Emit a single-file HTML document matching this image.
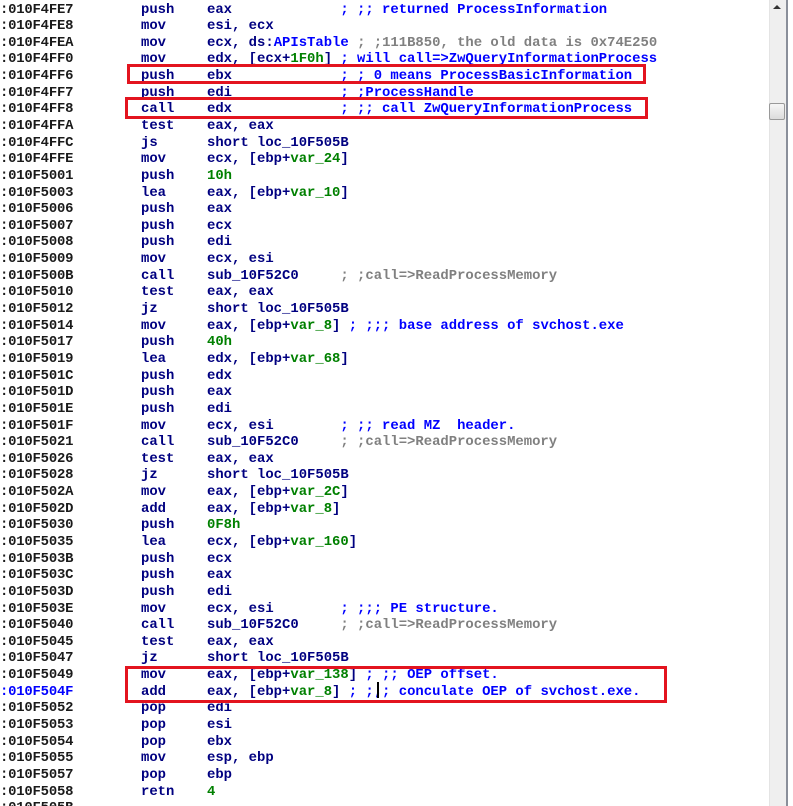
<!DOCTYPE html>
<html><head><meta charset="utf-8"><style>
html,body{margin:0;padding:0;background:#fff;width:793px;height:806px;overflow:hidden}
body{position:relative;font-family:"Liberation Mono",monospace;font-size:13.9px;font-weight:bold}
.l{position:absolute;left:0;height:16.64px;line-height:16.64px;white-space:pre}
.a{position:absolute;left:0;color:#1a1a1a;letter-spacing:-0.2px}
.m{position:absolute;left:141px;color:#000080}
.o{position:absolute;left:207px;color:#000080}
.c{color:#0000ff}.g{color:#808080}.n{color:#008000}
.box{position:absolute;border:3px solid #e3141f;box-sizing:border-box}
.sb{position:absolute;left:769px;top:0;width:17px;height:806px;background:#efefef;border-left:1px solid #e4e4e4}
.sbb{position:absolute;left:786px;top:0;width:2px;height:806px;background:#8a8f9a}
</style></head><body>
<div class="sb"></div><div class="sbb"></div>
<div style="position:absolute;left:773px;top:5px;width:0;height:0;border-left:4px solid transparent;border-right:4px solid transparent;border-bottom:4px solid #333"></div>
<div style="position:absolute;left:769px;top:103px;width:16px;height:17px;background:linear-gradient(#f6f6f6,#dcdcdc);border:1px solid #999;border-radius:2px;box-sizing:border-box"></div>
<div id="c"></div>
<div class="box" style="left:127px;top:64px;width:519px;height:20px"></div>
<div class="box" style="left:125px;top:97px;width:523px;height:22px"></div>
<div class="box" style="left:125px;top:666px;width:542px;height:37px"></div>
<div style="position:absolute;left:377px;top:682px;width:2px;height:16px;background:#000"></div>
<script>
var L=[
["010F4FE7","push","eax             <span class=c>; ;; returned ProcessInformation</span>"],
["010F4FE8","mov","esi, ecx"],
["010F4FEA","mov","ecx, ds:<span class=c>APIsTable</span> <span class=g>; ;111B850, the old data is 0x74E250</span>"],
["010F4FF0","mov","edx, [ecx+<span class=n>1F0h</span>] <span class=c>; will call=&gt;ZwQueryInformationProcess</span>"],
["010F4FF6","push","ebx             <span class=c>; ; 0 means ProcessBasicInformation</span>"],
["010F4FF7","push","edi             <span class=c>; ;ProcessHandle</span>"],
["010F4FF8","call","edx             <span class=c>; ;; call ZwQueryInformationProcess</span>"],
["010F4FFA","test","eax, eax"],
["010F4FFC","js","short loc_10F505B"],
["010F4FFE","mov","ecx, [ebp+<span class=n>var_24</span>]"],
["010F5001","push","<span class=n>10h</span>"],
["010F5003","lea","eax, [ebp+<span class=n>var_10</span>]"],
["010F5006","push","eax"],
["010F5007","push","ecx"],
["010F5008","push","edi"],
["010F5009","mov","ecx, esi"],
["010F500B","call","sub_10F52C0     <span class=g>; ;call=&gt;ReadProcessMemory</span>"],
["010F5010","test","eax, eax"],
["010F5012","jz","short loc_10F505B"],
["010F5014","mov","eax, [ebp+<span class=n>var_8</span>] <span class=c>; ;;; base address of svchost.exe</span>"],
["010F5017","push","<span class=n>40h</span>"],
["010F5019","lea","edx, [ebp+<span class=n>var_68</span>]"],
["010F501C","push","edx"],
["010F501D","push","eax"],
["010F501E","push","edi"],
["010F501F","mov","ecx, esi        <span class=c>; ;; read MZ  header.</span>"],
["010F5021","call","sub_10F52C0     <span class=g>; ;call=&gt;ReadProcessMemory</span>"],
["010F5026","test","eax, eax"],
["010F5028","jz","short loc_10F505B"],
["010F502A","mov","eax, [ebp+<span class=n>var_2C</span>]"],
["010F502D","add","eax, [ebp+<span class=n>var_8</span>]"],
["010F5030","push","<span class=n>0F8h</span>"],
["010F5035","lea","ecx, [ebp+<span class=n>var_160</span>]"],
["010F503B","push","ecx"],
["010F503C","push","eax"],
["010F503D","push","edi"],
["010F503E","mov","ecx, esi        <span class=c>; ;;; PE structure.</span>"],
["010F5040","call","sub_10F52C0     <span class=g>; ;call=&gt;ReadProcessMemory</span>"],
["010F5045","test","eax, eax"],
["010F5047","jz","short loc_10F505B"],
["010F5049","mov","eax, [ebp+<span class=n>var_138</span>] <span class=c>; ;; OEP offset.</span>"],
["010F504F","add","eax, [ebp+<span class=n>var_8</span>] <span class=c>; ;;; conculate OEP of svchost.exe.</span>"],
["010F5052","pop","edi"],
["010F5053","pop","esi"],
["010F5054","pop","ebx"],
["010F5055","mov","esp, ebp"],
["010F5057","pop","ebp"],
["010F5058","retn","<span class=n>4</span>"],
["010F505B","",""]
];
var h="";
for(var i=0;i<L.length;i++){
 var t=(1.5+i*16.64).toFixed(2);
 var ac=L[i][0]=="010F504F"?' style="color:#0000ff"':'';
 h+='<div class="l" style="top:'+t+'px;width:768px"><span class="a"'+ac+'>:'+L[i][0]+'</span><span class="m">'+L[i][1]+'</span><span class="o">'+L[i][2]+'</span></div>';
}
document.getElementById("c").innerHTML=h;
</script>
</body></html>
